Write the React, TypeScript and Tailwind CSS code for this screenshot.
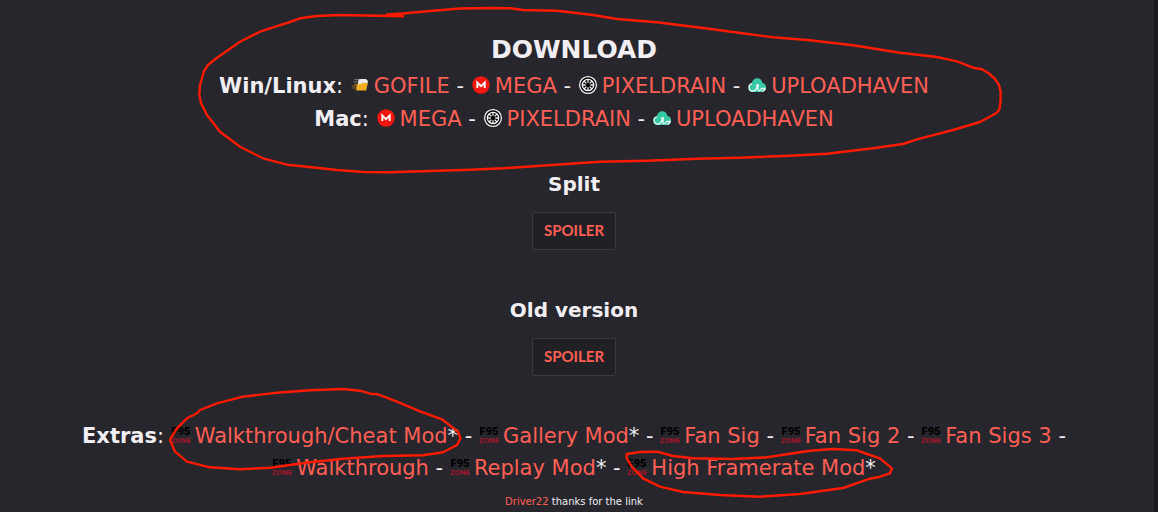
import type { ReactNode } from "react";

type IconName = "gofile" | "mega" | "pixeldrain" | "uploadhaven" | "f95";

type LinkItem = {
  label: string;
  icon: IconName;
  starred?: boolean;
};

const winLinux: LinkItem[] = [
  { label: "GOFILE", icon: "gofile" },
  { label: "MEGA", icon: "mega" },
  { label: "PIXELDRAIN", icon: "pixeldrain" },
  { label: "UPLOADHAVEN", icon: "uploadhaven" },
];

const mac: LinkItem[] = winLinux.slice(1);

const extras: LinkItem[] = [
  { label: "Walkthrough/Cheat Mod", icon: "f95", starred: true },
  { label: "Gallery Mod", icon: "f95", starred: true },
  { label: "Fan Sig", icon: "f95" },
  { label: "Fan Sig 2", icon: "f95" },
  { label: "Fan Sigs 3", icon: "f95" },
  { label: "Walkthrough", icon: "f95" },
  { label: "Replay Mod", icon: "f95", starred: true },
  { label: "High Framerate Mod", icon: "f95", starred: true },
];

const strokes = [
  "M387 14.5 L403 13.5 L430 11 L460 8.5 L490 8 L510 8.3 L523 10 L557 10.7 L593 15 L617 19 L657 22.3 L703 28 L750 34.3 L773 37.3 L810 40.3 L853 45.3 L900 52.7 L937 57 L957 61.3 L973 67.7 L982 69.3 L989 73.5 L995 79 L999 85 L1000.7 92 L1000.5 102 L999.5 109 L997 112.7 L980 122 L953 130 L917 139.3 L903 144 L873 148.3 L827 153.7 L790 155.7 L740 157.7 L697 158.7 L647 160.7 L600 161.7 L537 166 L503 168.3 L470 169.7 L430 171 L390 172.3 L363 172 L337 170 L307 166.7 L287 164.7 L263 158.3 L240 146.7 L220 131.7 L207 115 L201 103 L199.3 95 L200 85 L204 71 L208 65 L215 59.3 L240 41.7 L260 31.7 L290 22 L300 18.3 L317 16 L340 15 L377 15.7 L403 16.3",
  "M171.7 436.7 L177 428.3 L187 418.3 L197 413.3 L200 410 L217 403.3 L243 396.7 L277 392.7 L310 390.3 L343 389 L360 390.7 L370 393.7 L378 394.3 L397 401.7 L420 411.3 L442 419.3 L448 424 L458 431.7 L460.5 438.3 L457 445 L443 452.3 L423 455.3 L383 456 L343 458.7 L310 462.3 L270 467.7 L240 469.3 L210 467.3 L187 461.7 L175 451.7 L170 440 Z",
  "M626.7 454 L640 452 L657 451.7 L673 456 L693 458.3 L733 459 L767 457.3 L810 450.7 L833 449 L857 450.3 L867 454 L880 458.3 L892 468.3 L890 473.3 L880 476.7 L870 478.7 L843 488 L800 494 L760 496.7 L720 495 L683 492 L660 486.7 L643 478.3 L631.7 466.7 L626.7 458 Z",
];

function Icon({ name }: { name: IconName }) {
  const cls = "mr-1 inline-block h-5 w-5 align-[-2px]";

  if (name === "gofile") {
    return (
      <svg viewBox="0 0 20 20" className={cls} aria-hidden="true">
        <path d="M8.5 4h7.500l2 2-1.200 5H7.600z" fill="#e9e9ee" />
        <path d="M6.600 9.200h4.200l1-1.200h6l-1.600 7.400H6.200z" fill="#f0ae1c" />
        <path d="M4.500 4.600h5M3.500 6.800h5" stroke="#8c8c92" strokeWidth="0.800" />
        <path d="M4 9.200h3M2.400 13h5M1.500 11h5" stroke="#a97d18" strokeWidth="0.800" />
      </svg>
    );
  }

  if (name === "mega") {
    return (
      <svg viewBox="0 0 20 20" className={cls} aria-hidden="true">
        <circle cx="10" cy="10" r="8.700" fill="#f5170f" />
        <path d="M6.300 13V7.600l3.700 3.600 3.700-3.600V13" fill="none" stroke="#fff" strokeWidth="1.900" />
      </svg>
    );
  }

  if (name === "pixeldrain") {
    return (
      <svg viewBox="0 0 20 20" className={cls} aria-hidden="true">
        <circle cx="10" cy="10" r="8.400" fill="#050506" stroke="#f4f4f6" strokeWidth="1.300" />
        <circle cx="10" cy="10" r="5.700" fill="none" stroke="#f4f4f6" strokeWidth="1.300" />
        <path
          d="M10 4.300v3.400M10 12.300v3.400M4.300 10h3.400M12.300 10h3.400M6 6l2.400 2.400M11.600 11.600l2.400 2.400M14 6l-2.400 2.400M8.400 11.600L6 14"
          stroke="#f4f4f6"
          strokeWidth="1.300"
        />
      </svg>
    );
  }

  if (name === "uploadhaven") {
    return (
      <svg viewBox="0 0 20 20" className={cls} aria-hidden="true">
        <path
          d="M5.500 17a4.200 4.200 0 0 1-.8-8.300C5.200 5.500 7.300 3.200 10.200 3.200s4.900 2 5.200 4.900A4.500 4.500 0 0 1 15 17z"
          fill="#37c9a5"
        />
        <path
          d="M5 8.700A3.800 3.800 0 0 0 5.800 16.200c4 0 3.600-3.600 5.200-6.400l-2.200.3M11.200 10c-.2 3-1 5.400.9 5.800 1.400.3 1.500-2 2.900-2.300s2.300.5 3.400-.4M18.200 13.200c-.2 1.900-1.400 2.900-3.200 3.100"
          fill="none"
          stroke="#f0fbf8"
          strokeWidth="1.300"
        />
      </svg>
    );
  }

  return (
    <svg viewBox="0 0 20 20" className={cls} aria-hidden="true">
      <text x="10" y="10" textAnchor="middle" className="fill-black font-['Roboto'] text-[11px] font-black">
        F95
      </text>
      <text x="10" y="18" textAnchor="middle" className="fill-[#a3152c] font-['Roboto'] text-[8px] font-bold">
        ZONE
      </text>
    </svg>
  );
}

function LinkRow({ title, items }: { title: string; items: LinkItem[] }) {
  return (
    <p>
      <b>{title}</b>:{" "}
      {items.map((item, i) => (
        <span key={item.label}>
          <span className="whitespace-nowrap">
            <Icon name={item.icon} />
            <a href="#" className="text-[#ff5f55]">
              {item.label}
            </a>
            {item.starred ? "*" : null}
            {i < items.length - 1 ? " -" : null}
          </span>{" "}
        </span>
      ))}
    </p>
  );
}

function Spoiler({ title }: { title: ReactNode }) {
  return (
    <section className="flex flex-col items-center gap-3">
      <h3 className="text-xl leading-8 font-bold">{title}</h3>
      <button
        type="button"
        className="h-[38px] rounded-xs border border-[#3a393f] bg-[#212025] px-[11px] pb-0.5 font-['Lato'] text-[15px] leading-5 font-bold text-[#ff5f55]"
      >
        SPOILER
      </button>
    </section>
  );
}

export default function App() {
  return (
    <div className="min-h-screen border-r-4 border-[#1b1a20] bg-[#27262c] pr-1.5">
      <main className="relative flex min-h-screen flex-col px-10 pt-[34px] text-center font-['DejaVu_Sans',Verdana,sans-serif] text-[21px] leading-8 text-[#f1eff3]">
        <h2 className="text-[25px] leading-8 font-bold">DOWNLOAD</h2>
        <div className="mt-1 leading-[33px]">
          <LinkRow title="Win/Linux" items={winLinux} />
          <LinkRow title="Mac" items={mac} />
        </div>

        <div className="mt-8 flex flex-col gap-11">
          <Spoiler title="Split" />
          <Spoiler title="Old version" />
        </div>

        <div className="mt-11">
          <LinkRow title="Extras" items={extras} />
        </div>
        <p className="mt-2 text-[10px] leading-5">
          <a href="#" className="text-[#ff5f55]">
            Driver22
          </a>{" "}
          thanks for the link
        </p>

        {/* hand-drawn red markers */}
        <svg
          viewBox="0 0 1148 512"
          className="pointer-events-none absolute top-0 left-1/2 h-[512px] w-[1148px] -translate-x-1/2"
          aria-hidden="true"
        >
          {strokes.map((d) => (
            <path
              key={d}
              d={d}
              fill="none"
              stroke="#ff1a00"
              strokeWidth="2.400"
              strokeLinecap="round"
              strokeLinejoin="round"
            />
          ))}
        </svg>
      </main>
    </div>
  );
}
